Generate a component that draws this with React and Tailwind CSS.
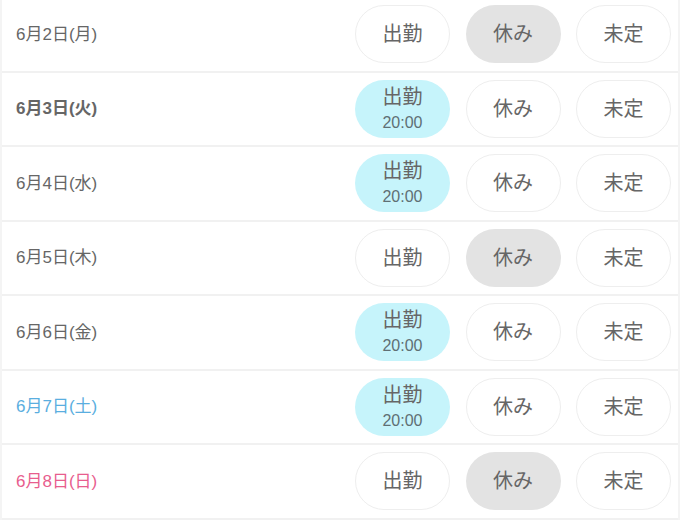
const days = [
  { label: "6月2日(月)", status: "off" },
  { label: "6月3日(火)", status: "work", time: "20:00", today: true },
  { label: "6月4日(水)", status: "work", time: "20:00" },
  { label: "6月5日(木)", status: "off" },
  { label: "6月6日(金)", status: "work", time: "20:00" },
  { label: "6月7日(土)", status: "work", time: "20:00", tone: "sat" },
  { label: "6月8日(日)", status: "off", tone: "sun" },
];

const toneClass = {
  sat: "text-[#5aaee0]",
  sun: "text-[#e85d8e]",
};

function Pill({ active, activeClass, children }) {
  return (
    <button
      className={
        "w-[95px] h-[58px] rounded-full flex flex-col items-center justify-center leading-none " +
        (active ? activeClass : "bg-white border border-[#eeeeee]")
      }
    >
      {children}
    </button>
  );
}

function DayRow({ day }) {
  const isWork = day.status === "work";
  return (
    <div className="h-[74.5px] border-b-2 border-[#f1f1f1] flex items-center justify-between pl-[14px] pr-[7px]">
      <span
        className={
          "text-[17px] " +
          (day.today ? "font-bold " : "") +
          (toneClass[day.tone] || "text-[#666666]")
        }
      >
        {day.label}
      </span>
      <div className="flex gap-[15.5px] text-[#666666]">
        <Pill active={isWork} activeClass="bg-[#c6f4fb]">
          <span className="text-[20px]">出勤</span>
          {isWork && <span className="text-[16px] mt-[8px] text-[#5f6f74]">{day.time}</span>}
        </Pill>
        <Pill active={day.status === "off"} activeClass="bg-[#e3e3e3]">
          <span className="text-[20px]">休み</span>
        </Pill>
        <Pill active={false}>
          <span className="text-[20px]">未定</span>
        </Pill>
      </div>
    </div>
  );
}

export default function App() {
  return (
    <div
      className="w-[680px] h-[524px] overflow-hidden bg-white"
      style={{ fontFamily: '"Liberation Sans", "Noto Sans CJK JP", sans-serif' }}
    >
      <div className="-mt-[2px] border-l-2 border-r-2 border-[#f4f4f4]">
        {days.map((d) => (
          <DayRow key={d.label} day={d} />
        ))}
      </div>
    </div>
  );
}
